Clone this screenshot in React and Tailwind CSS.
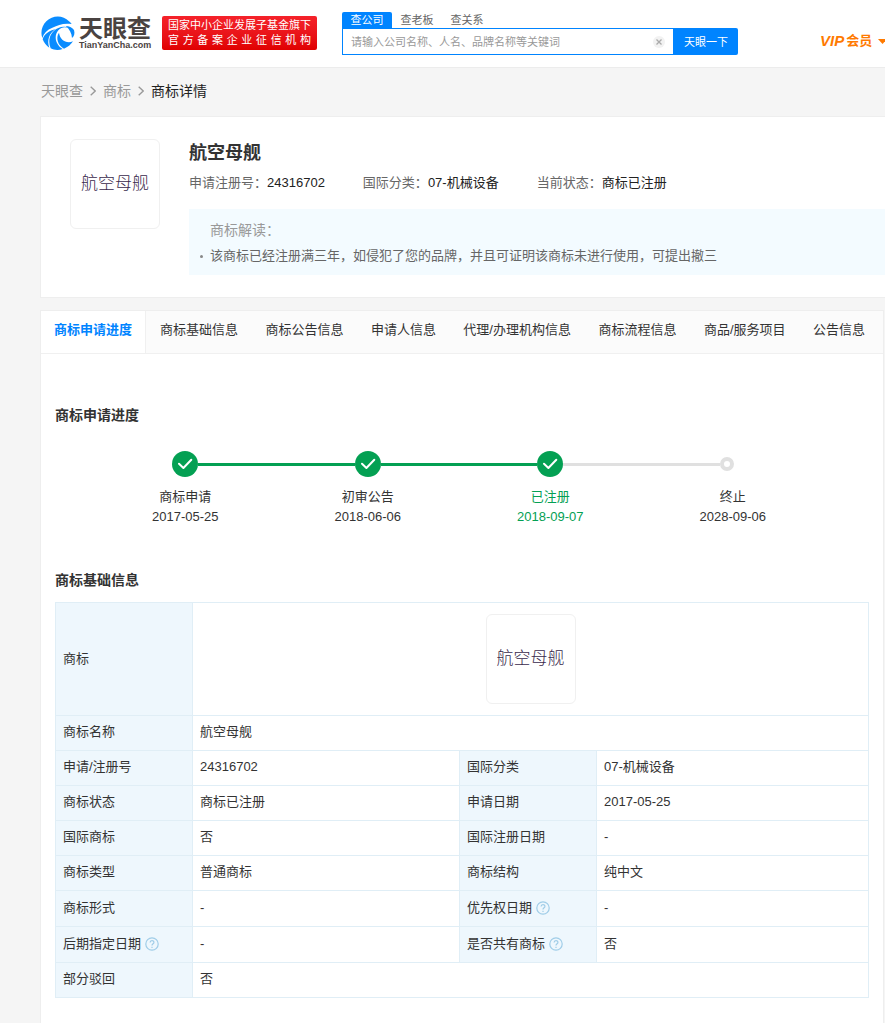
import React from "react";

const TABS = [
  "商标基础信息",
  "商标公告信息",
  "申请人信息",
  "代理/办理机构信息",
  "商标流程信息",
  "商品/服务项目",
  "公告信息",
];

const STEPS = [
  { name: "商标申请", date: "2017-05-25", before: "bg-transparent", after: "bg-[#04a053]", text: "text-[#333]", done: true },
  { name: "初审公告", date: "2018-06-06", before: "bg-[#04a053]", after: "bg-[#04a053]", text: "text-[#333]", done: true },
  { name: "已注册", date: "2018-09-07", before: "bg-[#04a053]", after: "bg-[#e0e0e0]", text: "text-[#04a053]", done: true },
  { name: "终止", date: "2028-09-06", before: "bg-[#e0e0e0]", after: "bg-transparent", text: "text-[#333]", done: false },
];

const ROWS = [
  [{ label: "申请/注册号", value: "24316702" }, { label: "国际分类", value: "07-机械设备" }],
  [{ label: "商标状态", value: "商标已注册" }, { label: "申请日期", value: "2017-05-25" }],
  [{ label: "国际商标", value: "否" }, { label: "国际注册日期", value: "-" }],
  [{ label: "商标类型", value: "普通商标" }, { label: "商标结构", value: "纯中文" }],
  [{ label: "商标形式", value: "-" }, { label: "优先权日期", value: "-", help: true }],
  [{ label: "后期指定日期", value: "-", help: true }, { label: "是否共有商标", value: "否", help: true }],
];

function LogoMark() {
  return (
    <svg className="size-[34px] shrink-0" viewBox="0 0 102 102" fill="#0a8cff" aria-hidden="true">
      <path d="M84 16 C66 -3 35 -3 16 16 C2 30 -2 50 4 66 C8 52 18 41 34 35 C52 28 66 20 92 24 C90 21 87 18 84 16 Z" />
      <path d="M5 70 C9 80 16 89 25 95 C17 74 24 51 44 40 C25 43 10 54 5 70 Z" />
      <path d="M29 97 C40 103 54 103 65 99 C46 88 36 62 52 43 C60 34 72 32 80 36 C74 31 62 32 52 36 C27 47 19 74 29 97 Z" />
      <path d="M69 98 C80 94 90 86 96 76 C76 84 57 72 54 50 C43 66 51 88 69 98 Z" />
      <path d="M74 30 C84 30 93 34 99 42 C102 52 100 61 93 66 C92 52 86 40 74 30 Z" />
    </svg>
  );
}

function CheckDot() {
  return (
    <svg className="size-[26px]" viewBox="0 0 26 26" aria-hidden="true">
      <circle cx="13" cy="13" r="13" fill="#04a053" />
      <path d="M7 12.8 L11.4 17 L19.3 8.8" fill="none" stroke="#fff" strokeWidth="2" strokeLinecap="round" strokeLinejoin="round" />
    </svg>
  );
}

function HelpIcon() {
  return (
    <svg className="size-[14px]" viewBox="0 0 14 14" fill="none" stroke="#a0cde8" strokeWidth="1.2" aria-hidden="true">
      <circle cx="7" cy="7" r="6.2" />
      <path d="M5.1 5.6 C5.1 3 8.9 3 8.9 5.4 C8.9 6.8 7 6.8 7 8.5" />
      <path d="M7 9.8 V10.9" />
    </svg>
  );
}

function Chevron() {
  return (
    <svg className="h-[10px] w-[6px]" viewBox="0 0 6 10" fill="none" stroke="#999" strokeWidth="1.3" aria-hidden="true">
      <path d="M0.7 0.7 L5.2 5 L0.7 9.3" />
    </svg>
  );
}

function MarkPicture({ className = "" }) {
  return (
    <div
      className={`flex size-[90px] shrink-0 items-center justify-center rounded-md border border-[#f0f0f0] bg-white pb-1 font-['Noto_Sans_CJK_SC',sans-serif] text-[17px] font-light text-[#3a2a4c] ${className}`}
    >
      航空母舰
    </div>
  );
}

function Field({ item, wide }) {
  return (
    <>
      <th scope="row" className="border border-[#e0eef6] bg-[#eef7fd] px-[7px] pt-[7px] pb-[9px] text-left font-normal">
        <span className="flex items-center gap-1">
          {item.label}
          {item.help && (
            <button type="button" aria-label={`${item.label}说明`} className="flex h-[19px] items-center">
              <HelpIcon />
            </button>
          )}
        </span>
      </th>
      <td colSpan={wide ? 3 : 1} className="border border-[#e0eef6] px-[7px] pt-[7px] pb-[9px]">
        {item.value}
      </td>
    </>
  );
}

function Header() {
  return (
    <header className="flex h-[68px] items-start overflow-hidden border-b border-[#ececec] bg-white pl-[41px]">
      <a href="#" className="mt-4 flex items-center gap-1">
        <LogoMark />
        <span className="flex w-[74px] flex-col text-[#4a4341]">
          <span className="text-[24px] leading-6 font-bold whitespace-nowrap">天眼查</span>
          <span className="text-[9px] leading-[9px] font-bold">TianYanCha.com</span>
        </span>
      </a>
      <div className="mt-4 ml-[9px] flex h-[34px] w-[155px] shrink-0 flex-col justify-center rounded-xs bg-linear-to-b from-[#f5222a] to-[#e00000] px-[6px] text-[11px] leading-[15px] text-white">
        <span className="whitespace-nowrap">国家中小企业发展子基金旗下</span>
        <span className="[text-align-last:justify]">官方备案企业征信机构</span>
      </div>
      <form className="mt-3 ml-[25px] w-[396px] shrink-0 text-[11px]" onSubmit={(e) => e.preventDefault()}>
        <div className="flex h-4 text-[#666]">
          <button type="button" className="w-[50px] rounded-t-xs bg-[#0084ff] leading-4 text-white">查公司</button>
          <button type="button" className="w-[50px] leading-4">查老板</button>
          <button type="button" className="w-[50px] leading-4">查关系</button>
        </div>
        <div className="flex h-[27px]">
          <div className="flex min-w-0 flex-1 items-center border border-[#0084ff] pr-2 pl-2">
            <input
              type="text"
              aria-label="搜索"
              placeholder="请输入公司名称、人名、品牌名称等关键词"
              className="min-w-0 flex-1 outline-none placeholder:text-[#999]"
            />
            <button type="button" aria-label="清除" className="flex size-3 items-center justify-center rounded-full bg-[#f2f2f2]">
              <svg className="size-[6px]" viewBox="0 0 6 6" stroke="#aaa" strokeWidth="1.3" aria-hidden="true">
                <path d="M0.5 0.5 L5.5 5.5 M5.5 0.5 L0.5 5.5" />
              </svg>
            </button>
          </div>
          <button type="submit" className="w-16 rounded-r-xs bg-[#0084ff] text-white">天眼一下</button>
        </div>
      </form>
      <a href="#" className="mt-8 ml-[82px] flex shrink-0 items-center text-[13px] leading-[18px] font-bold text-[#ff7a00]">
        <span className="mr-[2px] text-[15px] italic">VIP</span>
        会员
        <svg className="ml-[6px] h-[5px] w-[9px]" viewBox="0 0 9 5" fill="#ff7a00" aria-hidden="true">
          <path d="M0 0 H9 L4.5 5 Z" />
        </svg>
      </a>
    </header>
  );
}

export default function App() {
  return (
    <div className="overflow-hidden bg-[#f5f5f5] font-['Liberation_Sans','Noto_Sans_CJK_SC',sans-serif] text-[13px] leading-[18px] text-[#333]">
      <Header />
      <nav aria-label="面包屑" className="flex h-12 items-center gap-[7px] pb-[2px] pl-[41px] text-[14px] text-[#999]">
        <a href="#">天眼查</a>
        <Chevron />
        <a href="#">商标</a>
        <Chevron />
        <span className="text-[#222]">商标详情</span>
      </nav>

      <main className="pl-10">
        <section className="flex border border-r-0 border-[#eee] bg-white pt-[22px] pb-[22px] pl-[29px]">
          <MarkPicture />
          <div className="ml-[29px] min-w-0 flex-1">
            <h1 className="pt-[2px] text-[18px] leading-6 font-bold">航空母舰</h1>
            <dl className="mt-[9px] flex gap-[38px]">
              <div className="flex">
                <dt className="text-[#666]">申请注册号：</dt>
                <dd className="text-[#222]">24316702</dd>
              </div>
              <div className="flex">
                <dt className="text-[#666]">国际分类：</dt>
                <dd className="text-[#222]">07-机械设备</dd>
              </div>
              <div className="flex">
                <dt className="text-[#666]">当前状态：</dt>
                <dd className="text-[#222]">商标已注册</dd>
              </div>
            </dl>
            <div className="mt-[17px] bg-[#f3fbff] pt-3 pb-[10px] pl-[21px]">
              <h2 className="text-[14px] text-[#999]">商标解读：</h2>
              <p className="mt-2 -ml-[10px] flex items-center gap-[7px] text-[#666]">
                <span className="size-[3px] rounded-full bg-[#888]" />
                该商标已经注册满三年，如侵犯了您的品牌，并且可证明该商标未进行使用，可提出撤三
              </p>
            </div>
          </div>
        </section>

        <section className="mt-3 mr-px border border-b-0 border-[#eee] bg-white pb-[25px]">
          <nav aria-label="商标信息" className="flex h-[43px] border-b border-[#f0f0f0] bg-[#fbfbfb]">
            <a href="#" className="w-[105px] border-r border-[#f0f0f0] bg-white pt-[10px] text-center font-bold text-[#0084ff]">
              商标申请进度
            </a>
            <div className="flex flex-1 justify-between pt-[10px] pr-[18px] pl-[14px]">
              {TABS.map((tab) => (
                <a key={tab} href="#" className="whitespace-nowrap">{tab}</a>
              ))}
            </div>
          </nav>

          <div className="px-[14px]">
            <h2 className="mt-[52px] text-[14px] font-bold">商标申请进度</h2>
            <ol className="mt-[27px] mr-[45px] ml-[39px] grid grid-cols-4">
              {STEPS.map((step) => (
                <li key={step.name} className={`flex flex-col text-center ${step.text}`}>
                  <div className="flex h-[26px] items-center">
                    <span className={`h-[3px] flex-1 ${step.before}`} />
                    {step.done ? (
                      <CheckDot />
                    ) : (
                      <span className="w-[26px]">
                        <span className="block size-[14px] rounded-full border-4 border-[#e0e0e0] bg-white" />
                      </span>
                    )}
                    <span className={`h-[3px] flex-1 ${step.after}`} />
                  </div>
                  <span className="mt-[10px] leading-5">{step.name}</span>
                  <span className="leading-5">{step.date}</span>
                </li>
              ))}
            </ol>

            <h2 className="mt-[44px] text-[14px] font-bold">商标基础信息</h2>
            <table className="mt-[13px] w-full table-fixed border-collapse">
              <colgroup>
                <col className="w-[137px]" />
                <col className="w-[267px]" />
                <col className="w-[137px]" />
                <col />
              </colgroup>
              <tbody>
                <tr>
                  <th scope="row" className="border border-[#e0eef6] bg-[#eef7fd] px-[7px] text-left font-normal">商标</th>
                  <td colSpan={3} className="border border-[#e0eef6] py-[11px]">
                    <MarkPicture className="mx-auto" />
                  </td>
                </tr>
                <tr><Field item={{ label: "商标名称", value: "航空母舰" }} wide /></tr>
                {ROWS.map(([left, right]) => (
                  <tr key={left.label}>
                    <Field item={left} />
                    <Field item={right} />
                  </tr>
                ))}
                <tr><Field item={{ label: "部分驳回", value: "否" }} wide /></tr>
              </tbody>
            </table>
          </div>
        </section>
      </main>
    </div>
  );
}
